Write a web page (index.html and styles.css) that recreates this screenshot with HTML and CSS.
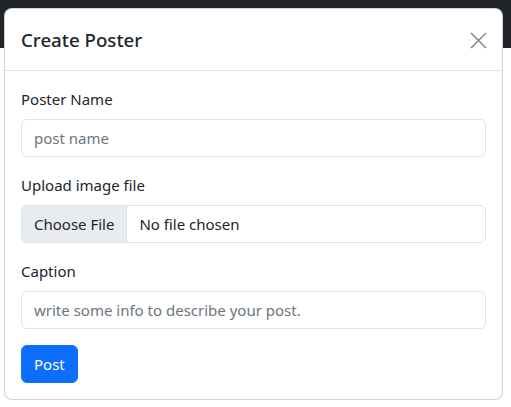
FILE: index.html
```html
<!DOCTYPE html>
<html>
<head>
<meta charset="utf-8">
<link rel="stylesheet" href="styles.css">
</head>
<body>
<div class="navbar"></div>
<div class="modal">
  <div class="modal-header">
    <h5 class="modal-title">Create Poster</h5>
    <button class="btn-close" type="button" aria-label="Close">
      <svg width="17" height="17" viewBox="0 0 17 17"><path d="M1 1 L16 16 M16 1 L1 16" stroke="#000" stroke-width="1.4" fill="none"/></svg>
    </button>
  </div>
  <div class="modal-body">
    <div class="field">
      <label class="form-label">Poster Name</label>
      <div class="form-control placeholder">post name</div>
    </div>
    <div class="field">
      <label class="form-label">Upload image file</label>
      <div class="form-control file">
        <span class="file-btn">Choose File</span>
        <span class="file-name">No file chosen</span>
      </div>
    </div>
    <div class="field">
      <label class="form-label">Caption</label>
      <div class="form-control placeholder">write some info to describe your post.</div>
    </div>
    <button class="btn-primary" type="button">Post</button>
  </div>
</div>
</body>
</html>
```

FILE: styles.css
```css
* { box-sizing: border-box; }
html, body {
  margin: 0;
  padding: 0;
  background: #fff;
  font-family: "Noto Sans", "Open Sans", sans-serif;
  color: #212529;
  font-size: 15px;
  line-height: 24px;
}
body { position: relative; width: 511px; height: 407px; overflow: hidden; }
.navbar {
  height: 48px;
  background: #212529;
}
.modal {
  position: absolute;
  top: 8px;
  left: 4px;
  width: 499px;
  background: #fff;
  border: 1px solid rgba(0,0,0,.175);
  border-radius: 8px;
}
.modal-header {
  display: flex;
  align-items: center;
  justify-content: space-between;
  padding: 16px;
  border-bottom: 1px solid #dee2e6;
  height: 62px;
}
.modal-title {
  margin: 0;
  font-size: 18.7px;
  font-weight: 500;
  line-height: 30px;
}
.btn-close {
  border: 0;
  background: transparent;
  padding: 0;
  width: 17px;
  height: 17px;
  margin-right: -1px;
  margin-top: 1px;
  opacity: .5;
  display: flex;
}
.modal-body { padding: 16px; }
.field { margin-bottom: 16px; }
.form-label {
  display: block;
  margin-bottom: 8px;
  line-height: 24px;
}
.form-control {
  height: 38px;
  border: 1px solid #dee2e6;
  border-radius: 6px;
  padding: 6px 12px;
  line-height: 24px;
}
.placeholder { color: #6c757d; }
.form-control.file {
  display: flex;
  padding: 0;
  overflow: hidden;
}
.file-btn {
  background: #e9ecef;
  padding: 6px 12px;
  border-right: 1px solid #dee2e6;
}
.file-name { padding: 6px 12px; }
.btn-primary {
  display: block;
  height: 38px;
  padding: 6px 12px;
  background: #0d6efd;
  color: #fff;
  border: 1px solid #0d6efd;
  border-radius: 6px;
  font-family: inherit;
  font-size: 15px;
  line-height: 24px;
}
```
